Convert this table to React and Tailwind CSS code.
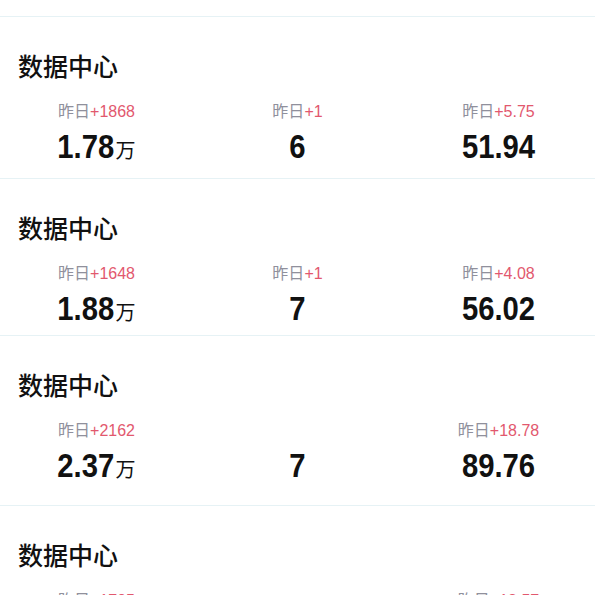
const sections = [
  {
    pb: "pb-[14px]",
    stats: [
      { delta: "+1868", value: "1.78", unit: "万" },
      { delta: "+1", value: "6" },
      { delta: "+5.75", value: "51.94" },
    ],
  },
  {
    pb: "pb-[9px]",
    stats: [
      { delta: "+1648", value: "1.88", unit: "万" },
      { delta: "+1", value: "7" },
      { delta: "+4.08", value: "56.02" },
    ],
  },
  {
    pb: "pb-[22px]",
    stats: [
      { delta: "+2162", value: "2.37", unit: "万" },
      { value: "7" },
      { delta: "+18.78", value: "89.76" },
    ],
  },
  {
    pb: "pb-[14px]",
    stats: [
      { delta: "+1795", value: "2.55", unit: "万" },
      { value: "7" },
      { delta: "+18.57", value: "108.33" },
    ],
  },
];

function Stat({ delta, value, unit }) {
  return (
    <div className="flex flex-col items-center">
      <div className="h-[20px] text-[16px] leading-[20px] text-[#90909c]">
        {delta && (
          <>
            昨日<span className="text-[#e2586e]">{delta}</span>
          </>
        )}
      </div>
      <div className="mt-[6px] flex h-[36px] items-baseline leading-[36px] text-[#111]">
        {unit ? (
          <>
            <span className="font-num -ml-[9px] inline-block origin-right scale-x-[0.86] text-[34px] font-bold">
              {value}
            </span>
            <span className="ml-[1px] text-[20px]">{unit}</span>
          </>
        ) : (
          <span className="font-num inline-block scale-x-[0.86] text-[34px] font-bold">{value}</span>
        )}
      </div>
    </div>
  );
}

export default function App() {
  return (
    <div
      className="h-[595px] w-[595px] overflow-hidden bg-white"
      style={{ fontFamily: '"Liberation Sans", "Noto Sans CJK SC", sans-serif' }}
    >
      <style>{`.font-num{font-family:"Liberation Sans",sans-serif;}`}</style>
      <div className="h-[16px]" />
      {sections.map((s, i) => (
        <section key={i} className={`border-t border-[#e6f2f5] pt-[33px] ${s.pb}`}>
          <h2 className="px-[18px] text-[25px] leading-[34px] font-medium text-[#111]">数据中心</h2>
          <div className="-mx-1 mt-[18px] grid grid-cols-3">
            {s.stats.map((st, j) => (
              <Stat key={j} {...st} />
            ))}
          </div>
        </section>
      ))}
    </div>
  );
}
